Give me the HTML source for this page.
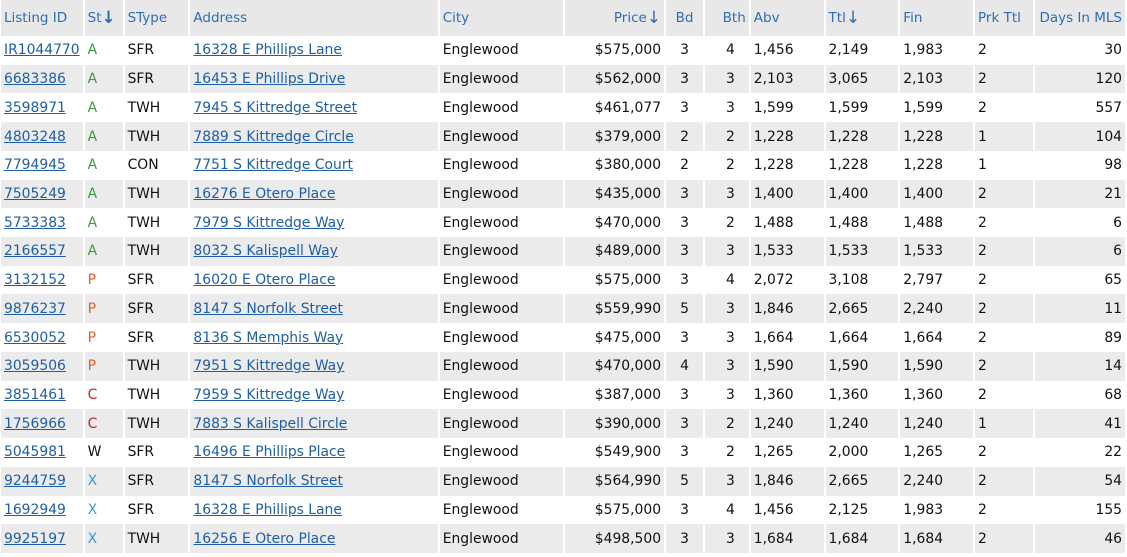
<!DOCTYPE html>
<html><head><meta charset="utf-8"><style>
body{margin:0;background:#fff;width:1127px;height:557px;overflow:hidden}
table{border-collapse:separate;border-spacing:2px 0;margin-left:-1px;font-family:"DejaVu Sans","Liberation Sans",sans-serif;font-size:13.9px;color:#111;table-layout:fixed}
th{background:#e8e8e8;color:#2d6db5;font-weight:normal;text-align:left;height:36px;padding:0 3px;white-space:nowrap;font-size:13.5px}
td{height:28.72px;padding:0 3px;white-space:nowrap}
tbody tr:nth-child(even) td{background:#ebebeb}
tbody tr:nth-child(odd) td{background:#fff}
a{color:#1d5ea8;text-decoration:underline}
.r{text-align:right}
.c{text-align:center}
.b{text-align:right;padding-right:14px}
.A{color:#3c9a3c}.P{color:#e0602a}.C{color:#c02828}.W{color:#111}.X{color:#3a96dc}
.ar{font-size:17px;vertical-align:-1px}
</style></head><body>
<table>
<colgroup><col style="width:81px"><col style="width:38px"><col style="width:64px"><col style="width:248px"><col style="width:124px"><col style="width:99px"><col style="width:37px"><col style="width:44px"><col style="width:73px"><col style="width:73px"><col style="width:73px"><col style="width:58px"><col style="width:90px"></colgroup>
<thead><tr><th>Listing ID</th><th>St<b class="ar">&#8595;</b></th><th>SType</th><th>Address</th><th>City</th><th class="r">Price<span class="ar">&#8595;</span></th><th class="c">Bd</th><th class="r">Bth</th><th>Abv</th><th>Ttl<span class="ar">&#8595;</span></th><th>Fin</th><th>Prk Ttl</th><th class="r">Days In MLS</th></tr></thead>
<tbody>
<tr><td><a>IR1044770</a></td><td class="A">A</td><td>SFR</td><td><a>16328 E Phillips Lane</a></td><td>Englewood</td><td class="r">$575,000</td><td class="c">3</td><td class="b">4</td><td>1,456</td><td>2,149</td><td>1,983</td><td>2</td><td class="r">30</td></tr>
<tr><td><a>6683386</a></td><td class="A">A</td><td>SFR</td><td><a>16453 E Phillips Drive</a></td><td>Englewood</td><td class="r">$562,000</td><td class="c">3</td><td class="b">3</td><td>2,103</td><td>3,065</td><td>2,103</td><td>2</td><td class="r">120</td></tr>
<tr><td><a>3598971</a></td><td class="A">A</td><td>TWH</td><td><a>7945 S Kittredge Street</a></td><td>Englewood</td><td class="r">$461,077</td><td class="c">3</td><td class="b">3</td><td>1,599</td><td>1,599</td><td>1,599</td><td>2</td><td class="r">557</td></tr>
<tr><td><a>4803248</a></td><td class="A">A</td><td>TWH</td><td><a>7889 S Kittredge Circle</a></td><td>Englewood</td><td class="r">$379,000</td><td class="c">2</td><td class="b">2</td><td>1,228</td><td>1,228</td><td>1,228</td><td>1</td><td class="r">104</td></tr>
<tr><td><a>7794945</a></td><td class="A">A</td><td>CON</td><td><a>7751 S Kittredge Court</a></td><td>Englewood</td><td class="r">$380,000</td><td class="c">2</td><td class="b">2</td><td>1,228</td><td>1,228</td><td>1,228</td><td>1</td><td class="r">98</td></tr>
<tr><td><a>7505249</a></td><td class="A">A</td><td>TWH</td><td><a>16276 E Otero Place</a></td><td>Englewood</td><td class="r">$435,000</td><td class="c">3</td><td class="b">3</td><td>1,400</td><td>1,400</td><td>1,400</td><td>2</td><td class="r">21</td></tr>
<tr><td><a>5733383</a></td><td class="A">A</td><td>TWH</td><td><a>7979 S Kittredge Way</a></td><td>Englewood</td><td class="r">$470,000</td><td class="c">3</td><td class="b">2</td><td>1,488</td><td>1,488</td><td>1,488</td><td>2</td><td class="r">6</td></tr>
<tr><td><a>2166557</a></td><td class="A">A</td><td>TWH</td><td><a>8032 S Kalispell Way</a></td><td>Englewood</td><td class="r">$489,000</td><td class="c">3</td><td class="b">3</td><td>1,533</td><td>1,533</td><td>1,533</td><td>2</td><td class="r">6</td></tr>
<tr><td><a>3132152</a></td><td class="P">P</td><td>SFR</td><td><a>16020 E Otero Place</a></td><td>Englewood</td><td class="r">$575,000</td><td class="c">3</td><td class="b">4</td><td>2,072</td><td>3,108</td><td>2,797</td><td>2</td><td class="r">65</td></tr>
<tr><td><a>9876237</a></td><td class="P">P</td><td>SFR</td><td><a>8147 S Norfolk Street</a></td><td>Englewood</td><td class="r">$559,990</td><td class="c">5</td><td class="b">3</td><td>1,846</td><td>2,665</td><td>2,240</td><td>2</td><td class="r">11</td></tr>
<tr><td><a>6530052</a></td><td class="P">P</td><td>SFR</td><td><a>8136 S Memphis Way</a></td><td>Englewood</td><td class="r">$475,000</td><td class="c">3</td><td class="b">3</td><td>1,664</td><td>1,664</td><td>1,664</td><td>2</td><td class="r">89</td></tr>
<tr><td><a>3059506</a></td><td class="P">P</td><td>TWH</td><td><a>7951 S Kittredge Way</a></td><td>Englewood</td><td class="r">$470,000</td><td class="c">4</td><td class="b">3</td><td>1,590</td><td>1,590</td><td>1,590</td><td>2</td><td class="r">14</td></tr>
<tr><td><a>3851461</a></td><td class="C">C</td><td>TWH</td><td><a>7959 S Kittredge Way</a></td><td>Englewood</td><td class="r">$387,000</td><td class="c">3</td><td class="b">3</td><td>1,360</td><td>1,360</td><td>1,360</td><td>2</td><td class="r">68</td></tr>
<tr><td><a>1756966</a></td><td class="C">C</td><td>TWH</td><td><a>7883 S Kalispell Circle</a></td><td>Englewood</td><td class="r">$390,000</td><td class="c">3</td><td class="b">2</td><td>1,240</td><td>1,240</td><td>1,240</td><td>1</td><td class="r">41</td></tr>
<tr><td><a>5045981</a></td><td class="W">W</td><td>SFR</td><td><a>16496 E Phillips Place</a></td><td>Englewood</td><td class="r">$549,900</td><td class="c">3</td><td class="b">2</td><td>1,265</td><td>2,000</td><td>1,265</td><td>2</td><td class="r">22</td></tr>
<tr><td><a>9244759</a></td><td class="X">X</td><td>SFR</td><td><a>8147 S Norfolk Street</a></td><td>Englewood</td><td class="r">$564,990</td><td class="c">5</td><td class="b">3</td><td>1,846</td><td>2,665</td><td>2,240</td><td>2</td><td class="r">54</td></tr>
<tr><td><a>1692949</a></td><td class="X">X</td><td>SFR</td><td><a>16328 E Phillips Lane</a></td><td>Englewood</td><td class="r">$575,000</td><td class="c">3</td><td class="b">4</td><td>1,456</td><td>2,125</td><td>1,983</td><td>2</td><td class="r">155</td></tr>
<tr><td><a>9925197</a></td><td class="X">X</td><td>TWH</td><td><a>16256 E Otero Place</a></td><td>Englewood</td><td class="r">$498,500</td><td class="c">3</td><td class="b">3</td><td>1,684</td><td>1,684</td><td>1,684</td><td>2</td><td class="r">46</td></tr>
</tbody></table>
</body></html>
